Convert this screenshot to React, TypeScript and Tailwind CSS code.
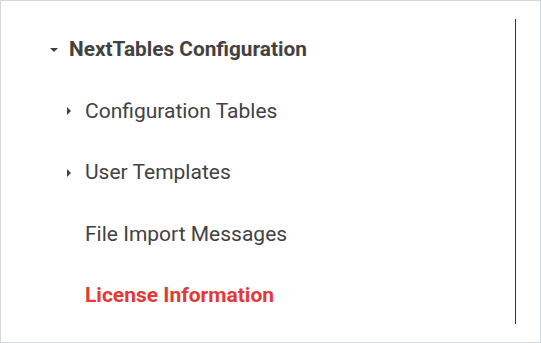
const items = [
  { label: "Configuration Tables", caret: true },
  { label: "User Templates", caret: true },
  { label: "File Import Messages", caret: false },
  { label: "License Information", caret: false, active: true },
];

function CaretDown() {
  return (
    <svg width="8" height="4" viewBox="0 0 8 4" className="block">
      <path d="M0 0 L8 0 L4 4 Z" fill="#424242" />
    </svg>
  );
}

function CaretRight() {
  return (
    <svg width="4" height="8" viewBox="0 0 4 8" className="block">
      <path d="M0 0 L4 4 L0 8 Z" fill="#424242" />
    </svg>
  );
}

export default function App() {
  return (
    <div
      className="w-[541px] h-[343px] border border-[#d5d7de] bg-white flex text-[#424242]"
      style={{ fontFamily: "Roboto, 'Liberation Sans', sans-serif" }}
    >
      <div className="flex-1 pt-[18px]">
        <div className="h-[61.5px] flex items-center">
          <div className="w-[57px] flex justify-end">
            <CaretDown />
          </div>
          <span className="ml-[11px] text-[20.8px] font-bold">NextTables Configuration</span>
        </div>
        {items.map((item) => (
          <div key={item.label} className="h-[61.5px] flex items-center">
            <div className="w-[70px] flex justify-end">
              {item.caret && <CaretRight />}
            </div>
            <span
              className={
                item.active
                  ? "ml-[14px] text-[21px] font-bold text-[#e53935]"
                  : "ml-[14px] text-[21px]"
              }
            >
              {item.label}
            </span>
          </div>
        ))}
      </div>
      <div className="w-[25px] pt-[18px] pb-[18px]">
        <div className="w-px h-full bg-[#333333]" />
      </div>
    </div>
  );
}
